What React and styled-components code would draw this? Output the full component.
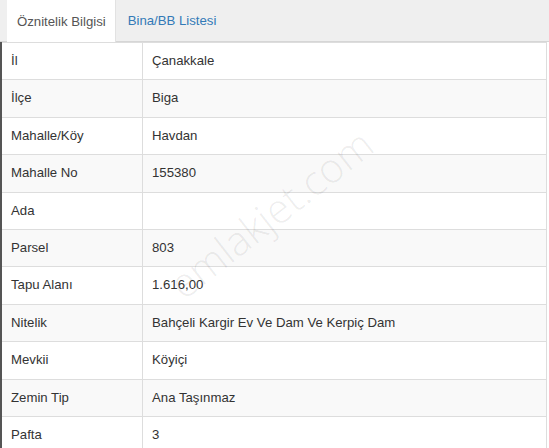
import React from 'react'
import { styled, createGlobalStyle } from 'styled-components'

const GlobalStyle = createGlobalStyle`
  html, body {
    margin: 0;
    padding: 0;
    background: #fff;
    font-family: "Liberation Sans", Arial, sans-serif;
  }
`
const Container = styled.div`
  position: relative;
  width: 549px;
  height: 448px;
  overflow: hidden;
  background: #fff;
`
const Tabs = styled.div`
  display: flex;
  height: 41px;
  padding-left: 7px;
  background: #efefef;
  border-bottom: 1px solid #d6d6d6;
`
const Tab = styled.div`
  display: flex;
  align-items: center;
  font-size: 13.2px;
  color: ${props => props.active ? "#555" : "#337ab7"};
  background: ${props => props.active ? "#fff" : "transparent"};
  border-right: ${props => props.active ? "1px solid #e2e2e2" : "none"};
  margin-bottom: ${props => props.active ? "-1px" : "0"};
  padding: ${props => props.active ? "0 9px 0 10px" : "0 12px"};
`
const Table = styled.table`
  width: 547px;
  border-collapse: collapse;
  border-left: 2px solid #555;
  border-right: 1px solid #ddd;
  font-size: 13.2px;
  color: #333;
`
const Row = styled.tr`
  background: ${props => props.striped ? "#f9f9f9" : "#fff"};
`
const Cell = styled.td`
  height: 20.4px;
  line-height: 20.4px;
  padding: 8px 9px;
  border-top: 1px solid #ddd;
  border-left: ${props => props.first ? "none" : "1px solid #ddd"};
  width: ${props => props.first ? "122px" : "auto"};
  vertical-align: middle;
  white-space: nowrap;
`
const Watermark = styled.div`
  position: absolute;
  left: 148px;
  top: 185px;
  font-size: 41px;
  font-weight: 300;
  color: rgba(0, 0, 0, 0.075);
  transform: rotate(-38deg);
  transform-origin: center;
  pointer-events: none;
  font-family: "Open Sans", "Liberation Sans", sans-serif;
`

const rows = [
  ["İl", "Çanakkale"],
  ["İlçe", "Biga"],
  ["Mahalle/Köy", "Havdan"],
  ["Mahalle No", "155380"],
  ["Ada", ""],
  ["Parsel", "803"],
  ["Tapu Alanı", "1.616,00"],
  ["Nitelik", "Bahçeli Kargir Ev Ve Dam Ve Kerpiç Dam"],
  ["Mevkii", "Köyiçi"],
  ["Zemin Tip", "Ana Taşınmaz"],
  ["Pafta", "3"],
]

const App = () => {
  return (
    <Container>
      <GlobalStyle />
      <Tabs>
        <Tab active>Öznitelik Bilgisi</Tab>
        <Tab>Bina/BB Listesi</Tab>
      </Tabs>
      <Table>
        <tbody>
          {rows.map((r, i) => (
            <Row key={r[0]} striped={i % 2 === 1}>
              <Cell first>{r[0]}</Cell>
              <Cell>{r[1]}</Cell>
            </Row>
          ))}
        </tbody>
      </Table>
      <Watermark>emlakjet.com</Watermark>
    </Container>
  )
}

export default App
